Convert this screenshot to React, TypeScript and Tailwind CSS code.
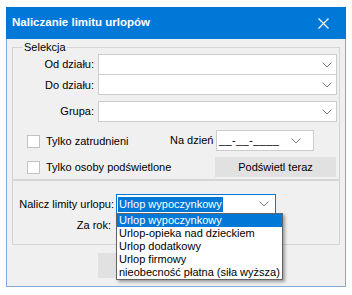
import { ReactNode } from 'react'

const font = { fontFamily: '"Liberation Sans", Arial, sans-serif' }

function Chevron({ className = '' }: { className?: string }) {
  return (
    <svg width="10" height="6" viewBox="0 0 10 6" className={className}>
      <polyline points="0.5,0.5 5,5 9.5,0.5" fill="none" stroke="#7a7a7a" strokeWidth="1" />
    </svg>
  )
}

function Combo({ className = '' }: { className?: string }) {
  return (
    <div className={`flex items-center justify-end bg-white border border-[#cccccc] pr-[4px] ${className}`}>
      <Chevron />
    </div>
  )
}

function Checkbox({ label }: { label: string }) {
  return (
    <div className="flex items-center">
      <div className="w-[13px] h-[13px] border border-[#c2c2c2] bg-white" />
      <span className="ml-[6px]">{label}</span>
    </div>
  )
}

function Row({ label, children, labelWidth }: { label: string; children: ReactNode; labelWidth: string }) {
  return (
    <div className="flex items-center">
      <div className={`${labelWidth} text-right pr-[4px]`}>{label}</div>
      {children}
    </div>
  )
}

const options = [
  'Urlop wypoczynkowy',
  'Urlop-opieka nad dzieckiem',
  'Urlop dodatkowy',
  'Urlop firmowy',
  'nieobecność płatna (siła wyższa)'
]

export default function App() {
  return (
    <div className="w-[352px] h-[295px] bg-white pt-[7px] pl-[6px] text-[11px] text-black leading-none" style={font}>
      <div className="w-[340px]">
        <div className="h-[32px] bg-[#0078d7] flex items-center justify-between pl-[6px] pr-[17px]">
          <span className="text-white font-bold text-[11.5px]">Naliczanie limitu urlopów</span>
          <svg width="11" height="11" viewBox="0 0 11 11">
            <path d="M0.5 0.5 L10.5 10.5 M10.5 0.5 L0.5 10.5" stroke="#ffffff" strokeWidth="1.2" />
          </svg>
        </div>

        <div className="h-[248px] bg-[#f0f0f0] border-x border-b border-[#86a8dc] pt-[8px] pl-[5px]">
          {/* Selekcja */}
          <div className="relative w-[328px] border border-[#d5d5d5] pt-[6px] pb-[2px]">
            <span className="absolute -top-[6px] left-[10px] px-[1px] bg-[#f0f0f0]">Selekcja</span>

            <Row label="Od działu:" labelWidth="w-[85px]">
              <Combo className="w-[239px] h-[21px]" />
            </Row>
            <Row label="Do działu:" labelWidth="w-[85px]">
              <Combo className="w-[239px] h-[21px] -mt-px" />
            </Row>
            <div className="mt-[6px]">
              <Row label="Grupa:" labelWidth="w-[85px]">
                <Combo className="w-[239px] h-[21px]" />
              </Row>
            </div>

            <div className="flex items-center h-[21px] mt-[8px]">
              <div className="w-[157px] pl-[14px] pt-[2px]">
                <Checkbox label="Tylko zatrudnieni" />
              </div>
              <div className="w-[46px]">Na dzień</div>
              <div className="w-[98px] h-[21px] bg-white border border-[#cccccc] flex items-center justify-between pl-[2px] pr-[12px]">
                <span className="tracking-[0.4px]">__-__-____</span>
                <Chevron />
              </div>
            </div>

            <div className="flex items-center h-[20px] mt-[6px]">
              <div className="w-[202px] pl-[14px]">
                <Checkbox label="Tylko osoby podświetlone" />
              </div>
              <button className="w-[121px] h-[20px] bg-[#e1e1e1] text-[11px]" style={font}>
                Podświetl teraz
              </button>
            </div>
          </div>

          {/* Nalicz */}
          <div className="w-[328px] border border-[#d5d5d5] pt-[13px] pb-[9px]">
            <div className="flex items-center">
              <div className="w-[103px] text-right pr-[2px]">Nalicz limity urlopu:</div>
              <div className="relative">
                <div className="w-[160px] h-[20px] bg-white border border-[#0078d7] flex items-center justify-between pl-[1px] pr-[6px]">
                  <span className="bg-[#0078d7] text-white h-[15px] px-[1px] flex items-center">Urlop wypoczynkowy</span>
                  <Chevron />
                </div>
                <div className="absolute left-0 top-[19px] z-10 w-[167px] bg-white border border-[#646464] shadow-[2px_2px_3px_rgba(0,0,0,0.35)]">
                  {options.map((o, i) => (
                    <div
                      key={o}
                      className={`h-[13px] flex items-center pl-[2px] ${i === 0 ? 'bg-[#0078d7] text-white' : ''}`}
                    >
                      {o}
                    </div>
                  ))}
                </div>
              </div>
            </div>
            <div className="flex items-center mt-px">
              <div className="w-[103px] text-right pr-[5px]">Za rok:</div>
              <div className="w-[60px] h-[20px] bg-white border border-[#cccccc]" />
            </div>
          </div>

          {/* OK / Anuluj sit under the open list */}
          <div className="flex gap-[8px] mt-[8px] ml-[86px]">
            <div className="w-[75px] h-[25px] bg-[#e1e1e1]" />
            <div className="w-[75px] h-[25px] bg-[#e1e1e1]" />
          </div>
        </div>
      </div>
    </div>
  )
}
